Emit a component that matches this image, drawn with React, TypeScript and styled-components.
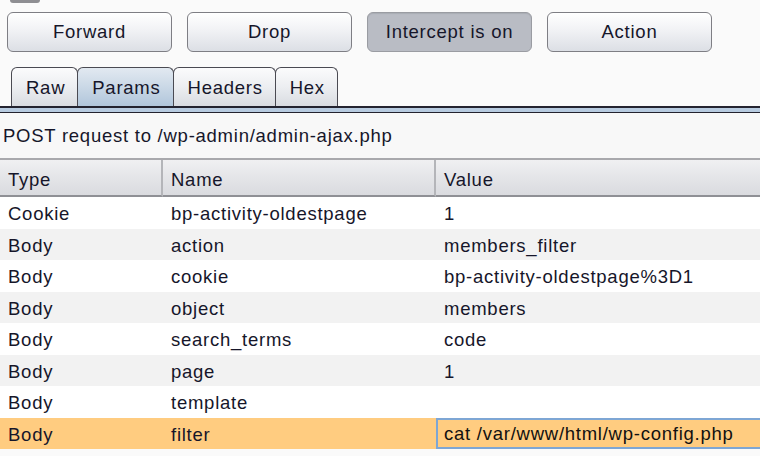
import React from "react";
import styled, { createGlobalStyle, css } from "styled-components";

const Global = createGlobalStyle`
  html, body { margin: 0; padding: 0; }
  body {
    background: #fafafa;
    font-family: "Liberation Sans", Arial, sans-serif;
    font-size: 18.5px;
    letter-spacing: 0.75px;
    color: #16162a;
    width: 760px;
    height: 456px;
    overflow: hidden;
  }
`;

const Page = styled.div`
  display: flex;
  flex-direction: column;
  width: 760px;
  height: 456px;
`;

const Stub = styled.div`
  width: 30px;
  height: 3px;
  margin-left: 10px;
  background: #8e8e92;
  border-radius: 0 0 3px 3px;
`;

const Toolbar = styled.div`
  display: flex;
  gap: 15px;
  padding: 9px 0 0 7px;
`;

const Button = styled.div<{ $pressed?: boolean }>`
  width: 165px;
  height: 40px;
  box-sizing: border-box;
  display: flex;
  align-items: center;
  justify-content: center;
  border-radius: 6px;
  border: 1px solid #7e7e84;
  background: linear-gradient(#ffffff 0%, #f1f2f5 45%, #dcdfe5 100%);
  box-shadow: inset 0 1px 0 #ffffff;
  ${(p) =>
    p.$pressed &&
    css`
      background: #b9bcc4;
      border-color: #9a9ca2;
      box-shadow: inset 0 1px 1px #a9acb4;
    `}
`;

const TabStrip = styled.div`
  display: flex;
  padding-left: 11px;
  margin-top: 15px;
  border-bottom: 2px solid #23232f;
`;

const Tab = styled.div<{ $active?: boolean }>`
  height: 39px;
  box-sizing: border-box;
  padding: 1px 12px 0 14px;
  display: flex;
  align-items: center;
  border: 1px solid #4a4a52;
  border-bottom: none;
  margin-right: -1px;
  border-radius: 6px 6px 0 0;
  background: linear-gradient(#fbfbfc 0%, #eceef1 50%, #d9dce1 100%);
  ${(p) =>
    p.$active &&
    css`
      background: linear-gradient(#e2e9f1 0%, #cad8e6 50%, #b1c6db 100%);
    `}
`;

const TabBand = styled.div`
  height: 4px;
  background: #b7cbe0;
  border-bottom: 1px solid #23232f;
`;

const Info = styled.div`
  height: 47px;
  box-sizing: border-box;
  display: flex;
  align-items: center;
  padding-left: 3px;
  background: #f8f8f8;
  border-bottom: 2px solid #a9a9ad;
`;

const Grid = styled.div`
  display: grid;
  grid-template-columns: 163px 273px 1fr;
`;

const HeadCell = styled.div<{ $sep?: boolean }>`
  height: 37px;
  box-sizing: border-box;
  display: flex;
  align-items: center;
  padding: 4px 0 0 8px;
  background: linear-gradient(#f0f0f2 0%, #e4e5e8 50%, #dadbdf 100%);
  border-bottom: 2px solid #8f9095;
  ${(p) => p.$sep && css`border-right: 2px solid #b4b5b9;`}
`;

const Cell = styled.div<{ $tone: "white" | "gray" | "sel"; $edit?: boolean }>`
  height: 31.5px;
  box-sizing: border-box;
  display: flex;
  align-items: center;
  padding: 3px 0 0 8px;
  white-space: nowrap;
  overflow: hidden;
  background: ${(p) =>
    p.$tone === "white" ? "#ffffff" : p.$tone === "gray" ? "#f2f2f2" : "#ffcc80"};
  ${(p) =>
    p.$edit &&
    css`
      border: 2px solid #7ea6d4;
      border-right: none;
      padding: 1px 0 0 6px;
      color: #111;
    `}
`;

const rows: [string, string, string][] = [
  ["Cookie", "bp-activity-oldestpage", "1"],
  ["Body", "action", "members_filter"],
  ["Body", "cookie", "bp-activity-oldestpage%3D1"],
  ["Body", "object", "members"],
  ["Body", "search_terms", "code"],
  ["Body", "page", "1"],
  ["Body", "template", ""],
  ["Body", "filter", "cat /var/www/html/wp-config.php"],
];

export default function App() {
  return (
    <Page>
      <Global />
      <Stub />
      <Toolbar>
        <Button>Forward</Button>
        <Button>Drop</Button>
        <Button $pressed>Intercept is on</Button>
        <Button>Action</Button>
      </Toolbar>
      <TabStrip>
        <Tab>Raw</Tab>
        <Tab $active>Params</Tab>
        <Tab>Headers</Tab>
        <Tab>Hex</Tab>
      </TabStrip>
      <TabBand />
      <Info>POST request to /wp-admin/admin-ajax.php</Info>
      <Grid>
        <HeadCell $sep>Type</HeadCell>
        <HeadCell $sep>Name</HeadCell>
        <HeadCell>Value</HeadCell>
        {rows.map((r, i) => {
          const last = i === rows.length - 1;
          const tone = last ? "sel" : i % 2 === 0 ? "white" : "gray";
          return (
            <React.Fragment key={i}>
              <Cell $tone={tone}>{r[0]}</Cell>
              <Cell $tone={tone}>{r[1]}</Cell>
              <Cell $tone={tone} $edit={last}>
                {r[2]}
              </Cell>
            </React.Fragment>
          );
        })}
      </Grid>
    </Page>
  );
}
